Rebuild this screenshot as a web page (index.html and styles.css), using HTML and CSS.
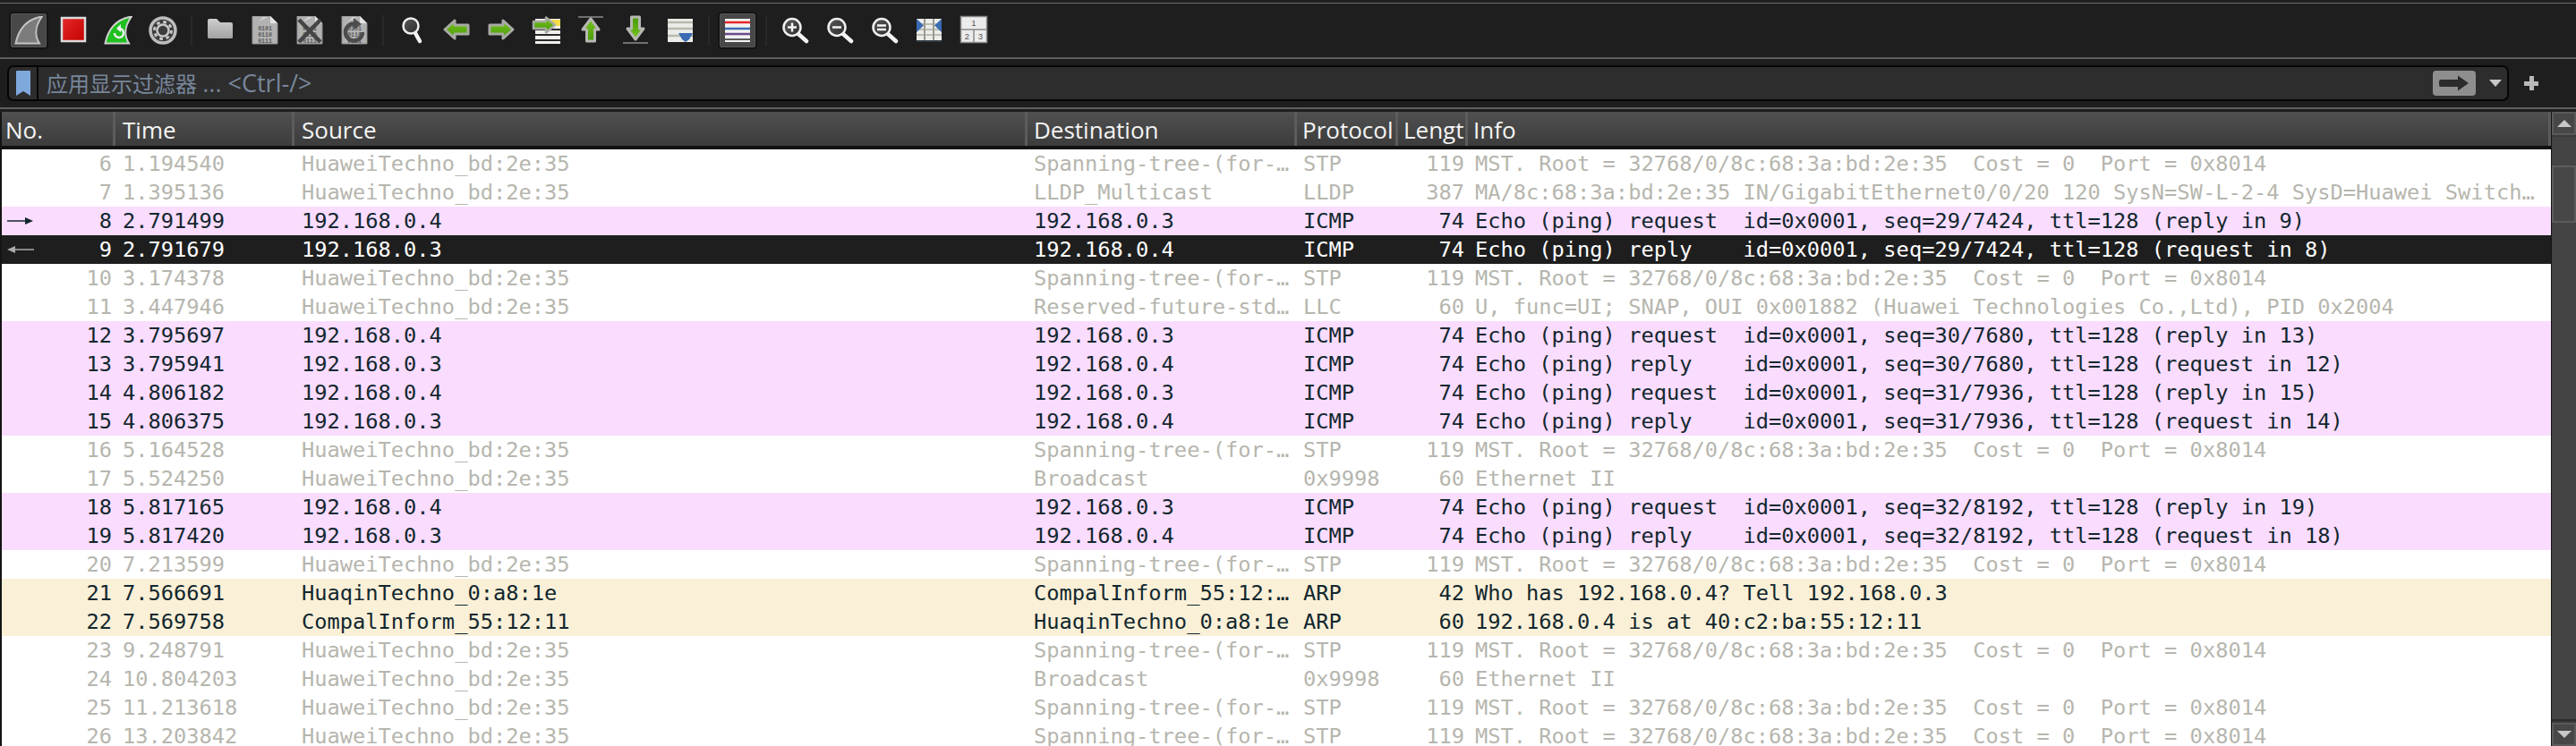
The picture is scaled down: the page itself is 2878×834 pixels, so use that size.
FILE: index.html
```html
<!DOCTYPE html>
<html>
<head>
	<meta charset="utf-8">
	<title>Wireshark</title>
	<link rel="stylesheet" href="styles.css">
</head>
<body>

<svg class="defs" width="0" height="0">
	<defs>
		<linearGradient id="gGreen" x1="0" y1="0" x2="0" y2="1"><stop offset="0" stop-color="#74c41e"/><stop offset="1" stop-color="#4a9a08"/></linearGradient>
		<linearGradient id="gRed" x1="0" y1="0" x2="1" y2="1"><stop offset="0" stop-color="#e62a2a"/><stop offset="1" stop-color="#c40000"/></linearGradient>
		<linearGradient id="gFolder" x1="0" y1="0" x2="0" y2="1"><stop offset="0" stop-color="#cfcfcf"/><stop offset="1" stop-color="#a2a2a2"/></linearGradient>
		<linearGradient id="gLens" x1="0" y1="0" x2="1" y2="1"><stop offset="0" stop-color="#5a5a5a"/><stop offset="1" stop-color="#2c2c2c"/></linearGradient>
		<symbol id="fin" viewBox="0 0 32 32"><path d="M31 0.5C15 3 5 14 1.500 30.500L28 30.500C22 21 24 10 31 0.500Z"/></symbol>
		<symbol id="file" viewBox="0 0 32 32">
			<path d="M2 0H22L30 8V31H2Z" fill="#b2b2b2" stroke="#8e8e8e"/>
			<path d="M22 0V8H30Z" fill="#e2e2e2"/>
			<path d="M9 6L14 1H19Z" fill="#d8d8d8"/>
			<text class="bits" x="16" y="16">0101</text>
			<text class="bits" x="16" y="23">0110</text>
			<text class="bits" x="16" y="30">0111</text>
		</symbol>
		<symbol id="lens" viewBox="0 0 32 32">
			<path d="M20 20L29 28" stroke="#f4f4f4" stroke-width="4.500" stroke-linecap="round"/>
			<circle cx="13" cy="12.500" r="9.500" fill="url(#gLens)" stroke="#f0f0f0" stroke-width="2.500"/>
		</symbol>
		<symbol id="arrow" viewBox="0 0 32 32">
			<path d="M3 15L14 5V10H29V20H14V25Z" fill="url(#gGreen)" stroke="#a9aba4" stroke-width="3" stroke-linejoin="round"/>
		</symbol>
		<symbol id="upArrow" viewBox="0 0 32 32">
			<path d="M16 3L25 15H20.500V28H11.500V15H7Z" fill="url(#gGreen)" stroke="#b6b8b2" stroke-width="3" stroke-linejoin="round"/>
		</symbol>
	</defs>
</svg>

<div class="toolbar">
	<span class="tool on"><svg class="ico" viewBox="0 0 32 32"><use href="#fin" fill="#7c7c7c" stroke="#c4c4c4" stroke-width="2"/></svg></span>
	<span class="tool"><svg class="ico" viewBox="0 0 32 32"><rect x="3" y="2" width="26" height="26" fill="url(#gRed)" stroke="#dcdcdc" stroke-width="2.500"/></svg></span>
	<span class="tool"><svg class="ico" viewBox="0 0 32 32">
		<use href="#fin" fill="#1fc01f" stroke="#d2d2d2" stroke-width="2"/>
		<path d="M12 19a5 5 0 1 0 6-5" fill="none" stroke="#f2f2f2" stroke-width="2.500"/>
		<path d="M19 9l-5 5 5 4z" fill="#f2f2f2"/>
	</svg></span>
	<span class="tool"><svg class="ico" viewBox="0 0 32 32">
		<circle cx="16" cy="16" r="14" fill="#3c3c3c" stroke="#bdbdbd" stroke-width="3.500"/>
		<circle cx="16" cy="16" r="9.500" fill="none" stroke="#c8c8c8" stroke-width="3" stroke-dasharray="3.700 3.760"/>
		<circle cx="16" cy="16" r="6.500" fill="none" stroke="#c8c8c8" stroke-width="2.500"/>
	</svg></span>
	<i class="sep"></i>
	<span class="tool"><svg class="ico" viewBox="0 0 32 32"><path d="M2 5Q2 3 4 3H12L16 7H28Q30 7 30 9V24Q30 25 28 25H4Q2 25 2 24Z" fill="url(#gFolder)"/></svg></span>
	<span class="tool"><svg class="ico" viewBox="0 0 32 32"><use href="#file"/></svg></span>
	<span class="tool"><svg class="ico" viewBox="0 0 32 32"><use href="#file"/><path d="M4 4L28 29M28 4L4 29" stroke="#454545" stroke-width="4.500"/></svg></span>
	<span class="tool"><svg class="ico" viewBox="0 0 32 32"><use href="#file"/>
		<path d="M25 18A9.500 9.500 0 1 1 15 8.500" fill="none" stroke="#4c4c4c" stroke-width="4.500"/>
		<path d="M15 2L24 9L15 15Z" fill="#4c4c4c"/>
	</svg></span>
	<i class="sep"></i>
	<span class="tool"><svg class="ico" viewBox="0 0 32 32">
		<path d="M20 19L25 28" stroke="#f4f4f4" stroke-width="4.500" stroke-linecap="round"/>
		<circle cx="15" cy="11" r="8.500" fill="url(#gLens)" stroke="#f0f0f0" stroke-width="2.500"/>
	</svg></span>
	<span class="tool"><svg class="ico" viewBox="0 0 32 32"><use href="#arrow"/></svg></span>
	<span class="tool"><svg class="ico flip" viewBox="0 0 32 32"><use href="#arrow"/></svg></span>
	<span class="tool"><svg class="ico" viewBox="0 0 32 32">
		<rect x="4" y="3" width="28" height="28" fill="#f0f0ec"/>
		<rect x="22" y="4" width="10" height="7" fill="#f4dc4a"/>
		<path d="M4 15H32M4 21H32M4 27H32" stroke="#2a2a2a" stroke-width="2"/>
		<path d="M26 10L16 1.500V6H2V14H16V18.500Z" fill="url(#gGreen)" stroke="#a9aba4" stroke-width="2.500" stroke-linejoin="round"/>
	</svg></span>
	<span class="tool"><svg class="ico" viewBox="0 0 32 32">
		<path d="M2 1H30" stroke="#707070" stroke-width="2"/>
		<use href="#upArrow"/>
	</svg></span>
	<span class="tool"><svg class="ico" viewBox="0 0 32 32">
		<path d="M2 30H30" stroke="#707070" stroke-width="2"/>
		<g transform="matrix(1 0 0 -1 0 29)"><use href="#upArrow"/></g>
	</svg></span>
	<span class="tool"><svg class="ico" viewBox="0 0 32 32">
		<rect x="2" y="3" width="28" height="26" fill="#ecece8"/>
		<path d="M2 7H30M2 14H30M2 22H30" stroke="#b9b9ae" stroke-width="2.500"/>
		<path d="M14 19H30L26 26L22 29L18 26Z" fill="#3a6bb3"/>
	</svg></span>
	<i class="sep"></i>
	<span class="tool on"><svg class="ico" viewBox="0 0 32 32">
		<rect x="2" y="3" width="28" height="26" fill="#f2f2f2"/>
		<path d="M2 7H30" stroke="#e6262a" stroke-width="2.500"/>
		<path d="M2 14H30" stroke="#3a6cb4" stroke-width="2.500"/>
		<path d="M2 20H30" stroke="#6b4a8c" stroke-width="2.500"/>
		<path d="M2 26H30" stroke="#2a2a2a" stroke-width="1.500"/>
	</svg></span>
	<i class="sep"></i>
	<span class="tool"><svg class="ico" viewBox="0 0 32 32"><use href="#lens"/><path d="M8 12.500H18M13 7.500V17.500" stroke="#f4f4f4" stroke-width="2.500"/></svg></span>
	<span class="tool"><svg class="ico" viewBox="0 0 32 32"><use href="#lens"/><path d="M8 12.500H18" stroke="#f4f4f4" stroke-width="2.500"/></svg></span>
	<span class="tool"><svg class="ico" viewBox="0 0 32 32"><use href="#lens"/><path d="M8 10.500H18M8 15H18" stroke="#f4f4f4" stroke-width="2.500"/></svg></span>
	<span class="tool"><svg class="ico" viewBox="0 0 32 32">
		<rect x="2" y="3" width="28" height="26" fill="#ecece8"/>
		<path d="M2 9H30M2 15H30M2 21H30" stroke="#bdbdb4" stroke-width="2"/>
		<path d="M11 3V29M21 3V29" stroke="#9a9a92" stroke-width="2"/>
		<path d="M2 3L10 10.500L2 18Z M30 3L22 10.500L30 18Z" fill="#3a6bb3"/>
		<path d="M2 28H30" stroke="#2e3a42" stroke-width="2"/>
	</svg></span>
	<span class="tool"><svg class="ico" viewBox="0 0 32 32">
		<rect x="1.500" y="0.500" width="29" height="29" fill="#ececec" stroke="#8a8a8a" stroke-width="1.500"/>
		<path d="M1.500 15H30.500M16 15V29.500" stroke="#8a8a8a" stroke-width="1.500"/>
		<text class="pane" x="16" y="11">1</text>
		<text class="pane" x="8.500" y="26">2</text>
		<text class="pane" x="23.500" y="26">3</text>
	</svg></span>
</div>

<div class="filterbar">
	<div class="filterbox">
		<span class="bookmark"><svg width="16" height="28" viewBox="0 0 16 28"><path d="M1 0H15Q16 0 16 1V28L8 23L0 28V1Q0 0 1 0Z" fill="#7fa8dc"/></svg></span>
		<span class="placeholder">应用显示过滤器 <span class="latin">... &lt;Ctrl-/&gt;</span></span>
		<span class="applybtn"><svg width="34" height="18" viewBox="0 0 34 18"><path d="M2 5H21V0.500L33 9L21 17.500V13H2Q0 13 0 11V7Q0 5 2 5Z" fill="#2b2b2b"/></svg></span>
		<i class="dropdown"></i>
	</div>
	<span class="addfilter"></span>
</div>

<div class="main">
	<div class="list">
		<div class="row head">
			<span class="c-no">No.</span><span class="c-time">Time</span><span class="c-src">Source</span><span class="c-dst">Destination</span><span class="c-pro">Protocol</span><span class="c-len">Lengt</span><span class="c-info">Info</span>
		</div>
		<div class="row stp"><span class="c-no">6</span><span class="c-time">1.194540</span><span class="c-src">HuaweiTechno_bd:2e:35</span><span class="c-dst">Spanning-tree-(for-…</span><span class="c-pro">STP</span><span class="c-len">119</span><span class="c-info">MST. Root = 32768/0/8c:68:3a:bd:2e:35  Cost = 0  Port = 0x8014</span></div>
		<div class="row stp"><span class="c-no">7</span><span class="c-time">1.395136</span><span class="c-src">HuaweiTechno_bd:2e:35</span><span class="c-dst">LLDP_Multicast</span><span class="c-pro">LLDP</span><span class="c-len">387</span><span class="c-info">MA/8c:68:3a:bd:2e:35 IN/GigabitEthernet0/0/20 120 SysN=SW-L-2-4 SysD=Huawei Switch…</span></div>
		<div class="row icmp"><span class="c-no"><svg class="rel" width="32" height="10" viewBox="0 0 32 10"><path d="M2 5H22" stroke="#12272e" stroke-width="1.500"/><path d="M22 1L31 5L22 9Z" fill="#12272e"/></svg>8</span><span class="c-time">2.791499</span><span class="c-src">192.168.0.4</span><span class="c-dst">192.168.0.3</span><span class="c-pro">ICMP</span><span class="c-len">74</span><span class="c-info">Echo (ping) request  id=0x0001, seq=29/7424, ttl=128 (reply in 9)</span></div>
		<div class="row sel"><span class="c-no"><svg class="rel" width="32" height="10" viewBox="0 0 32 10"><path d="M10 5H32" stroke="#aaa" stroke-width="1.500"/><path d="M11 1L2 5L11 9Z" fill="#aaa"/></svg>9</span><span class="c-time">2.791679</span><span class="c-src">192.168.0.3</span><span class="c-dst">192.168.0.4</span><span class="c-pro">ICMP</span><span class="c-len">74</span><span class="c-info">Echo (ping) reply    id=0x0001, seq=29/7424, ttl=128 (request in 8)</span></div>
		<div class="row stp"><span class="c-no">10</span><span class="c-time">3.174378</span><span class="c-src">HuaweiTechno_bd:2e:35</span><span class="c-dst">Spanning-tree-(for-…</span><span class="c-pro">STP</span><span class="c-len">119</span><span class="c-info">MST. Root = 32768/0/8c:68:3a:bd:2e:35  Cost = 0  Port = 0x8014</span></div>
		<div class="row stp"><span class="c-no">11</span><span class="c-time">3.447946</span><span class="c-src">HuaweiTechno_bd:2e:35</span><span class="c-dst">Reserved-future-std…</span><span class="c-pro">LLC</span><span class="c-len">60</span><span class="c-info">U, func=UI; SNAP, OUI 0x001882 (Huawei Technologies Co.,Ltd), PID 0x2004</span></div>
		<div class="row icmp"><span class="c-no">12</span><span class="c-time">3.795697</span><span class="c-src">192.168.0.4</span><span class="c-dst">192.168.0.3</span><span class="c-pro">ICMP</span><span class="c-len">74</span><span class="c-info">Echo (ping) request  id=0x0001, seq=30/7680, ttl=128 (reply in 13)</span></div>
		<div class="row icmp"><span class="c-no">13</span><span class="c-time">3.795941</span><span class="c-src">192.168.0.3</span><span class="c-dst">192.168.0.4</span><span class="c-pro">ICMP</span><span class="c-len">74</span><span class="c-info">Echo (ping) reply    id=0x0001, seq=30/7680, ttl=128 (request in 12)</span></div>
		<div class="row icmp"><span class="c-no">14</span><span class="c-time">4.806182</span><span class="c-src">192.168.0.4</span><span class="c-dst">192.168.0.3</span><span class="c-pro">ICMP</span><span class="c-len">74</span><span class="c-info">Echo (ping) request  id=0x0001, seq=31/7936, ttl=128 (reply in 15)</span></div>
		<div class="row icmp"><span class="c-no">15</span><span class="c-time">4.806375</span><span class="c-src">192.168.0.3</span><span class="c-dst">192.168.0.4</span><span class="c-pro">ICMP</span><span class="c-len">74</span><span class="c-info">Echo (ping) reply    id=0x0001, seq=31/7936, ttl=128 (request in 14)</span></div>
		<div class="row stp"><span class="c-no">16</span><span class="c-time">5.164528</span><span class="c-src">HuaweiTechno_bd:2e:35</span><span class="c-dst">Spanning-tree-(for-…</span><span class="c-pro">STP</span><span class="c-len">119</span><span class="c-info">MST. Root = 32768/0/8c:68:3a:bd:2e:35  Cost = 0  Port = 0x8014</span></div>
		<div class="row stp"><span class="c-no">17</span><span class="c-time">5.524250</span><span class="c-src">HuaweiTechno_bd:2e:35</span><span class="c-dst">Broadcast</span><span class="c-pro">0x9998</span><span class="c-len">60</span><span class="c-info">Ethernet II</span></div>
		<div class="row icmp"><span class="c-no">18</span><span class="c-time">5.817165</span><span class="c-src">192.168.0.4</span><span class="c-dst">192.168.0.3</span><span class="c-pro">ICMP</span><span class="c-len">74</span><span class="c-info">Echo (ping) request  id=0x0001, seq=32/8192, ttl=128 (reply in 19)</span></div>
		<div class="row icmp"><span class="c-no">19</span><span class="c-time">5.817420</span><span class="c-src">192.168.0.3</span><span class="c-dst">192.168.0.4</span><span class="c-pro">ICMP</span><span class="c-len">74</span><span class="c-info">Echo (ping) reply    id=0x0001, seq=32/8192, ttl=128 (request in 18)</span></div>
		<div class="row stp"><span class="c-no">20</span><span class="c-time">7.213599</span><span class="c-src">HuaweiTechno_bd:2e:35</span><span class="c-dst">Spanning-tree-(for-…</span><span class="c-pro">STP</span><span class="c-len">119</span><span class="c-info">MST. Root = 32768/0/8c:68:3a:bd:2e:35  Cost = 0  Port = 0x8014</span></div>
		<div class="row arp"><span class="c-no">21</span><span class="c-time">7.566691</span><span class="c-src">HuaqinTechno_0:a8:1e</span><span class="c-dst">CompalInform_55:12:…</span><span class="c-pro">ARP</span><span class="c-len">42</span><span class="c-info">Who has 192.168.0.4? Tell 192.168.0.3</span></div>
		<div class="row arp"><span class="c-no">22</span><span class="c-time">7.569758</span><span class="c-src">CompalInform_55:12:11</span><span class="c-dst">HuaqinTechno_0:a8:1e</span><span class="c-pro">ARP</span><span class="c-len">60</span><span class="c-info">192.168.0.4 is at 40:c2:ba:55:12:11</span></div>
		<div class="row stp"><span class="c-no">23</span><span class="c-time">9.248791</span><span class="c-src">HuaweiTechno_bd:2e:35</span><span class="c-dst">Spanning-tree-(for-…</span><span class="c-pro">STP</span><span class="c-len">119</span><span class="c-info">MST. Root = 32768/0/8c:68:3a:bd:2e:35  Cost = 0  Port = 0x8014</span></div>
		<div class="row stp"><span class="c-no">24</span><span class="c-time">10.804203</span><span class="c-src">HuaweiTechno_bd:2e:35</span><span class="c-dst">Broadcast</span><span class="c-pro">0x9998</span><span class="c-len">60</span><span class="c-info">Ethernet II</span></div>
		<div class="row stp"><span class="c-no">25</span><span class="c-time">11.213618</span><span class="c-src">HuaweiTechno_bd:2e:35</span><span class="c-dst">Spanning-tree-(for-…</span><span class="c-pro">STP</span><span class="c-len">119</span><span class="c-info">MST. Root = 32768/0/8c:68:3a:bd:2e:35  Cost = 0  Port = 0x8014</span></div>
		<div class="row stp"><span class="c-no">26</span><span class="c-time">13.203842</span><span class="c-src">HuaweiTechno_bd:2e:35</span><span class="c-dst">Spanning-tree-(for-…</span><span class="c-pro">STP</span><span class="c-len">119</span><span class="c-info">MST. Root = 32768/0/8c:68:3a:bd:2e:35  Cost = 0  Port = 0x8014</span></div>
	</div>
	<div class="scrollbar">
		<div class="sb-btn"><i class="tri-up"></i></div>
		<div class="sb-track"><div class="sb-thumb"></div></div>
		<div class="sb-btn"><i class="tri-down"></i></div>
	</div>
</div>

</body>
</html>
```

FILE: styles.css
```css
html, body {
	margin: 0;
	height: 100%;
	overflow: hidden;
}
body {
	background-color: #1e1e1e;
	display: flex;
	flex-direction: column;
	font-family: "Open Sans", "Noto Sans CJK SC", sans-serif;
}
.defs {
	display: block;
	flex: none;
}

/* main toolbar */
.toolbar {
	flex: none;
	height: 63px;
	box-sizing: border-box;
	margin-top: 3px;
	border-top: 1px solid #6c6c6c;
	border-bottom: 2px solid #5e5e5e;
	padding-left: 10px;
	display: flex;
	align-items: center;
	gap: 6px;
}
.tool {
	width: 44px;
	height: 42px;
	box-sizing: border-box;
	display: flex;
	align-items: center;
	justify-content: center;
	border-radius: 4px;
	border: 2px solid transparent;
}
.tool.on {
	background-color: #484848;
	border-color: #141414;
	box-shadow: inset 0 0 0 1px #555;
}
.ico {
	width: 32px;
	height: 32px;
	overflow: visible;
}
.flip {
	transform: scaleX(-1);
}
.sep {
	width: 8px;
	height: 34px;
	display: block;
	background: linear-gradient(#292929, #292929) center / 2px 100% no-repeat;
}
.bits {
	font: 700 6.500px "Liberation Mono", monospace;
	fill: #5a5a5a;
	text-anchor: middle;
}
.pane {
	font: 9.500px "Liberation Sans", sans-serif;
	fill: #555;
	text-anchor: middle;
}

/* display filter */
.filterbar {
	flex: none;
	height: 56px;
	box-sizing: border-box;
	padding: 7px 0 0 8px;
	border-bottom: 2px solid #5e5e5e;
	display: flex;
}
.filterbox {
	width: 2795px;
	height: 40px;
	box-sizing: border-box;
	background-color: #2d2d2d;
	border: 2px solid #050505;
	border-radius: 7px;
	display: flex;
	align-items: center;
}
.bookmark {
	width: 33px;
	height: 36px;
	box-sizing: border-box;
	padding-top: 4px;
	padding-left: 8px;
	border-right: 2px solid #050505;
	flex: none;
}
.bookmark svg {
	display: block;
}
.placeholder {
	margin-left: 9px;
	flex: 1;
	font-size: 24px;
	line-height: 36px;
	color: #78869a;
	white-space: nowrap;
}
.latin {
	font-size: 27px;
}
.applybtn {
	width: 48px;
	height: 28px;
	background-color: #8e8e8e;
	border-radius: 4px;
	display: flex;
	align-items: center;
	justify-content: center;
}
.dropdown {
	margin: 0 6px 0 15px;
	border-left: 7px solid transparent;
	border-right: 7px solid transparent;
	border-top: 8px solid #c8c8c8;
}
.addfilter {
	margin: 12px 0 0 17px;
	width: 16px;
	height: 16px;
	background:
		linear-gradient(#b8b8b8, #b8b8b8) center / 100% 5px no-repeat,
		linear-gradient(#b8b8b8, #b8b8b8) center / 5px 100% no-repeat;
}

/* packet list */
.main {
	flex: 1;
	min-height: 0;
	margin-top: 3px;
	display: flex;
	overflow: hidden;
	background-color: #141414;
}
.list {
	width: 2848px;
	margin-left: 2px;
	overflow: hidden;
	font-family: "DejaVu Sans Mono", monospace;
	font-size: 23.700px;
}
.row {
	height: 32px;
	line-height: 32px;
	display: grid;
	grid-template-columns: 127px 200px 819px 301px 113px 78px 1210px;
	white-space: pre;
}
.row span {
	display: block;
	overflow: hidden;
}
.c-no, .c-len {
	position: relative;
	text-align: right;
	padding-right: 4px;
}
.c-dst, .c-pro {
	padding-left: 7px;
}
.c-time, .c-src, .c-info {
	padding-left: 8px;
}
.rel {
	position: absolute;
	left: 4px;
	top: 11px;
}
.stp {
	background-color: #fff;
	color: #b6b6ae;
}
.icmp {
	background-color: #f9dcfe;
	color: #12272e;
}
.arp {
	background-color: #faf0d7;
	color: #12272e;
}
.sel {
	background-color: #1e1e1e;
	color: #fff;
}
.head {
	height: 38px;
	line-height: 36px;
	margin-bottom: 2px;
	border-bottom: 2px solid #101010;
	box-sizing: content-box;
	background: linear-gradient(#505050, #3c3c3c);
	color: #f4f4f4;
	font-family: "Open Sans", sans-serif;
	font-size: 26px;
}
.head span {
	border-right: 3px solid #5c5c5c;
	box-sizing: border-box;
	padding-top: 2px;
}
.head .c-no {
	text-align: left;
	padding-left: 4px;
}
.head .c-len {
	text-align: left;
	padding-right: 0;
	padding-left: 6px;
}
.head .c-pro, .head .c-info {
	padding-left: 6px;
}

/* scrollbar */
.scrollbar {
	width: 27px;
	margin-left: 1px;
	display: flex;
	flex-direction: column;
	background-color: #3a3a3a;
}
.sb-btn {
	flex: none;
	height: 26px;
	box-sizing: border-box;
	background-color: #474747;
	border: 2px solid #5a5a5a;
	display: flex;
	align-items: center;
	justify-content: center;
}
.tri-up, .tri-down {
	border-left: 8px solid transparent;
	border-right: 8px solid transparent;
}
.tri-up {
	border-bottom: 8px solid #c8c8c8;
}
.tri-down {
	border-top: 8px solid #c8c8c8;
}
.sb-track {
	flex: 1;
	margin: 2px 0;
	padding-top: 32px;
	background-color: #444;
	border-bottom: 2px solid #2b2b2b;
}
.sb-thumb {
	height: 64px;
	box-sizing: border-box;
	background-color: #474747;
	border: 2px solid #5c5c5c;
}
```
